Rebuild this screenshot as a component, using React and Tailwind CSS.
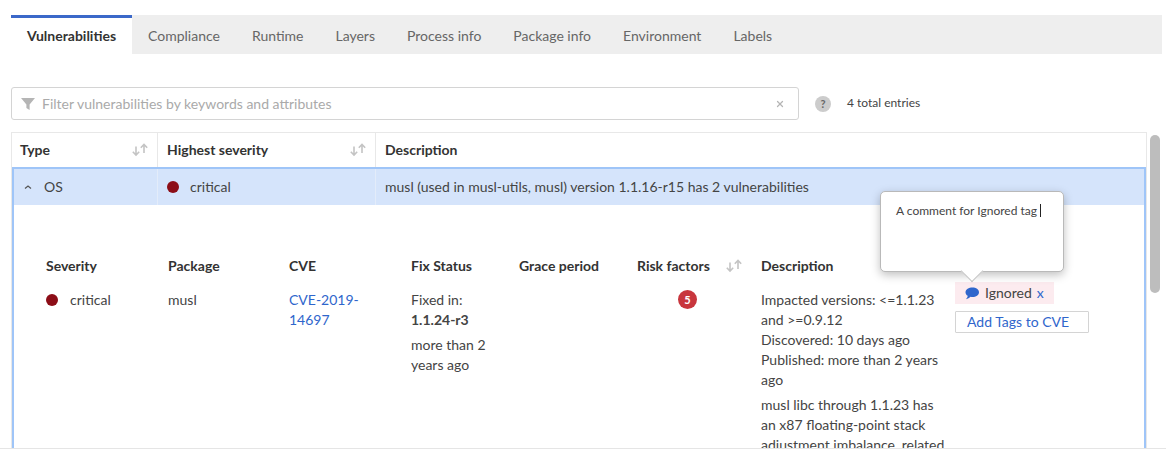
import { X } from "lucide-react";

const tabs = ["Compliance", "Runtime", "Layers", "Process info", "Package info", "Environment", "Labels"];

function SortArrows({ className }) {
  return (
    <svg width="18" height="14" viewBox="0 0 18 14" fill="none" stroke="#c4c4c4" strokeWidth="1.6" className={className}>
      <path d="M5 3.500v8.500M1.800 8.800 5 12l3.200-3.200" />
      <path d="M13 10V1.500M9.800 4.700 13 1.500l3.200 3.200" />
    </svg>
  );
}

function Dot() {
  return <span className="inline-block h-3 w-3 shrink-0 rounded-full bg-[#8c0d17]" />;
}

function DetailHead({ children }) {
  return <div className="flex h-[20px] items-center font-bold text-[#333]">{children}</div>;
}

export default function App() {
  return (
    <div className="flex h-[462px] w-[1166px] flex-col overflow-hidden bg-white pt-[15px] text-[14px] leading-[20px] text-[#444] font-['Lato','Noto_Sans',sans-serif]">
      {/* Tabs */}
      <div className="mx-[11px] flex h-[39px] w-[1151px] shrink-0 bg-[#eeeeee]">
        <div className="flex w-[121px] items-center justify-center border-t-[3px] border-[#3b68c9] bg-white pb-[1px] font-bold text-[#333]">
          Vulnerabilities
        </div>
        <div className="flex items-center gap-[32px] pl-[16px] pt-[3px] text-[#666]">
          {tabs.map((t) => (
            <span key={t}>{t}</span>
          ))}
        </div>
      </div>

      {/* Filter */}
      <div className="mx-[11px] mt-[33px] flex h-[33px] shrink-0 items-center">
        <div className="flex h-[33px] w-[788px] items-center rounded-[3px] border border-[#d4d4d4] pl-[9px] pr-[13px]">
          <svg width="14" height="14" viewBox="0 0 14 14" fill="#b5b5b5">
            <path d="M0 1h14L8.600 7.400V13L5.400 11V7.400z" />
          </svg>
          <span className="ml-[7px] flex-1 text-[#aaa]">Filter vulnerabilities by keywords and attributes</span>
          <X size={10} strokeWidth={3} color="#b5b5b5" />
        </div>
        <span className="ml-[16px] flex h-4 w-4 items-center justify-center rounded-full bg-[#cccccc] text-[11px] font-bold text-[#666]">?</span>
        <span className="ml-[16px] mb-[1px] text-[12px]">4 total entries</span>
      </div>

      {/* Table */}
      <div className="relative mx-[11px] mt-[12px] flex min-h-0 w-[1149px] flex-1 overflow-hidden">
        <div className="flex h-[316px] w-[1136px] shrink-0 flex-col overflow-hidden border-x border-t border-[#e8e8e8]">
          <div className="flex h-[34px] shrink-0 items-center font-bold text-[#333]">
            <div className="flex h-full w-[146px] items-center justify-between border-r border-[#e8e8e8] pl-[8px] pr-[8px]">
              Type <SortArrows />
            </div>
            <div className="flex h-full w-[218px] items-center justify-between border-r border-[#e8e8e8] pl-[9px] pr-[8px]">
              Highest severity <SortArrows />
            </div>
            <div className="pl-[9px]">Description</div>
          </div>

          <div className="flex min-h-0 flex-1 flex-col border-x-[2px] border-t-[2px] border-[#9fc5f8]">
            <div className="flex h-[36px] shrink-0 items-center bg-[#d5e4fb]">
              <div className="flex h-full w-[144px] items-center border-r border-[#e3ecfa] pl-[10px]">
                <svg width="8" height="6" viewBox="0 0 8 6" fill="none" stroke="#555" strokeWidth="1.2">
                  <path d="M1 4.500 4 2l3 2.500" />
                </svg>
                <span className="ml-[12px]">OS</span>
              </div>
              <div className="flex h-full w-[218px] items-center gap-[11px] border-r border-[#e3ecfa] pl-[9px]">
                <Dot />
                critical
              </div>
              <div className="pl-[9px]">musl (used in musl-utils, musl) version 1.1.16-r15 has 2 vulnerabilities</div>
            </div>

            <div className="grid grid-cols-[122px_121px_122px_108px_118px_124px_194px_1fr] pl-[32px] pt-[51px]">
              <DetailHead>Severity</DetailHead>
              <DetailHead>Package</DetailHead>
              <DetailHead>CVE</DetailHead>
              <DetailHead>Fix Status</DetailHead>
              <DetailHead>Grace period</DetailHead>
              <DetailHead>
                Risk factors <SortArrows className="ml-[15px]" />
              </DetailHead>
              <DetailHead>Description</DetailHead>
              <div />

              <div className="mt-[14px] flex h-[20px] items-center gap-[12px]">
                <Dot />
                critical
              </div>
              <div className="mt-[14px]">musl</div>
              <div className="mt-[14px] w-[80px] text-[#2f66cc]">CVE-2019-14697</div>
              <div className="mt-[14px] w-[85px]">
                Fixed in:
                <br />
                <b className="font-bold">1.1.24-r3</b>
                <div className="mt-[5px]">more than 2 years ago</div>
              </div>
              <div />
              <div className="mt-[14px] pl-[41px]">
                <span className="flex h-[19px] w-[19px] items-center justify-center rounded-full bg-[#c8363d] text-[11px] font-bold text-white">5</span>
              </div>
              <div className="mt-[14px] w-[186px]">
                Impacted versions: &lt;=1.1.23 and &gt;=0.9.12
                <br />
                Discovered: 10 days ago
                <br />
                Published: more than 2 years ago
                <div className="mt-[5px]">
                  musl libc through 1.1.23 has an x87 floating-point stack adjustment imbalance, related to the handling of x87 state
                </div>
              </div>
              <div className="mt-[6px]">
                <div className="flex h-[22px] w-[99px] items-center bg-[#fcebef] pl-[10px]">
                  <svg width="14" height="13" viewBox="0 0 14 13" fill="#2f66cc">
                    <path d="M7.500 0.500C11 0.500 14 2.500 14 5.200C14 8 11 10 7.500 10C6.800 10 6.200 9.900 5.600 9.800C4.400 11 2.800 12 1 12.200C2 11.200 2.600 10 2.700 8.800C1.300 8 0.500 6.700 0.500 5.200C0.500 2.500 3.800 0.500 7.500 0.500Z" />
                  </svg>
                  <span className="ml-[6px]">Ignored</span>
                  <span className="ml-[5px] text-[#2f66cc]">x</span>
                </div>
                <div className="mt-[7px] flex h-[22px] w-[134px] items-center rounded-[1px] border border-[#d4d4d4] pl-[11px] text-[#2f66cc]">
                  Add Tags to CVE
                </div>
              </div>
            </div>
          </div>
        </div>

        <div className="ml-[3px] mt-[3px] h-[158px] w-[10px] rounded-full bg-[#bdbdbd]" />

        {/* Comment popover */}
        <div className="absolute left-[869px] top-[59px] h-[81px] w-[184px] rounded-[5px] border border-[#b9b9b9] bg-white pl-[15px] pt-[9px] text-[12px] shadow-[0_3px_10px_rgba(0,0,0,0.25)]">
          <span>A comment for Ignored tag</span>
          <span className="ml-[3px] inline-block h-[13px] w-[1px] translate-y-[2px] bg-[#222]" />
          <span className="absolute bottom-[-8px] left-[83px] h-[16px] w-[16px] rotate-45 border-b border-r border-[#c4c4c4] bg-white" />
        </div>
      </div>

      <div className="h-[14px] shrink-0 border-t border-[#e5e5e5] bg-white" />
    </div>
  );
}
